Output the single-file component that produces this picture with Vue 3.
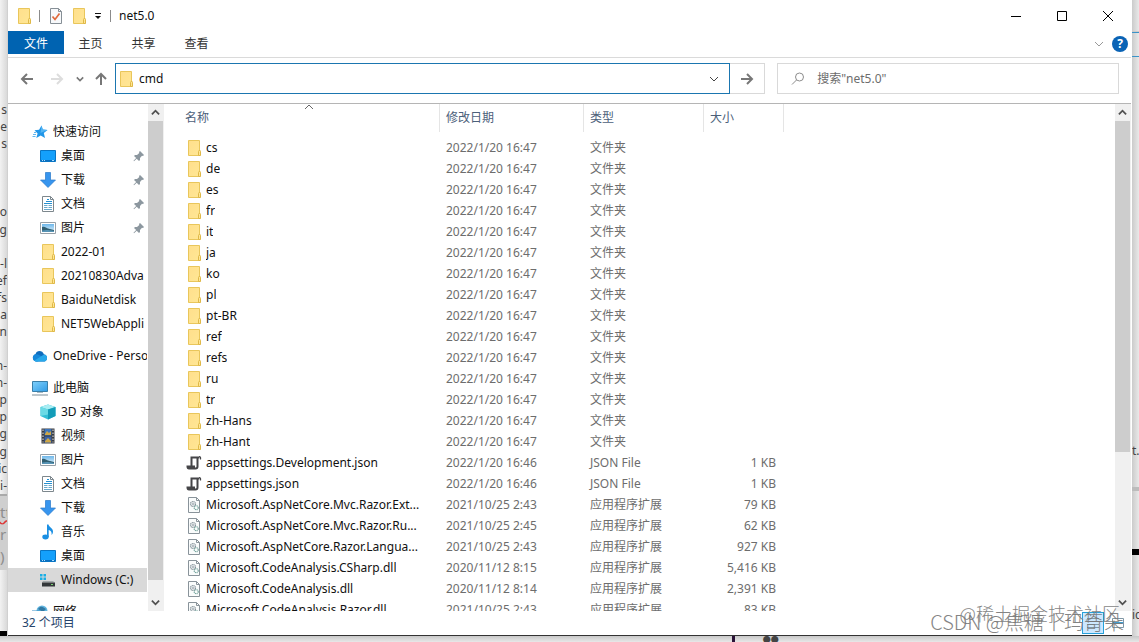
<script setup>
import { ref } from 'vue'

const address = ref('cmd')
const query = ref('')

const behind = ['s', 'e', 's', '', '', '', 'o', 'g', '', '-l', 'ef', 'fs', 'a', 'n', '', 'n-', 'n-', 'p', 'p', 'g', 'g', 'ic', 'i-']

const groups = [
  [
    { icon: 'star', label: '快速访问', root: true },
    { icon: 'desktop', label: '桌面', pin: true },
    { icon: 'down', label: '下载', pin: true },
    { icon: 'doc', label: '文档', pin: true },
    { icon: 'picture', label: '图片', pin: true },
    { icon: 'folder', label: '2022-01' },
    { icon: 'folder', label: '20210830Adva' },
    { icon: 'folder', label: 'BaiduNetdisk' },
    { icon: 'folder', label: 'NET5WebAppli' },
  ],
  [{ icon: 'cloud', label: 'OneDrive - Perso', root: true }],
  [
    { icon: 'pc', label: '此电脑', root: true },
    { icon: 'cube', label: '3D 对象' },
    { icon: 'film', label: '视频' },
    { icon: 'picture', label: '图片' },
    { icon: 'doc', label: '文档' },
    { icon: 'down', label: '下载' },
    { icon: 'music', label: '音乐' },
    { icon: 'desktop', label: '桌面' },
    { icon: 'drive', label: 'Windows (C:)', selected: true },
  ],
  [{ icon: 'network', label: '网络', root: true }],
]

const folders = ['cs', 'de', 'es', 'fr', 'it', 'ja', 'ko', 'pl', 'pt-BR', 'ref', 'refs', 'ru', 'tr', 'zh-Hans', 'zh-Hant']
const files = [
  ...folders.map((name) => ({ icon: 'folder', name, date: '2022/1/20 16:47', type: '文件夹', size: '' })),
  { icon: 'script', name: 'appsettings.Development.json', date: '2022/1/20 16:46', type: 'JSON File', size: '1 KB' },
  { icon: 'script', name: 'appsettings.json', date: '2022/1/20 16:46', type: 'JSON File', size: '1 KB' },
  { icon: 'dll', name: 'Microsoft.AspNetCore.Mvc.Razor.Ext...', date: '2021/10/25 2:43', type: '应用程序扩展', size: '79 KB' },
  { icon: 'dll', name: 'Microsoft.AspNetCore.Mvc.Razor.Ru...', date: '2021/10/25 2:45', type: '应用程序扩展', size: '62 KB' },
  { icon: 'dll', name: 'Microsoft.AspNetCore.Razor.Langua...', date: '2021/10/25 2:43', type: '应用程序扩展', size: '927 KB' },
  { icon: 'dll', name: 'Microsoft.CodeAnalysis.CSharp.dll', date: '2020/11/12 8:15', type: '应用程序扩展', size: '5,416 KB' },
  { icon: 'dll', name: 'Microsoft.CodeAnalysis.dll', date: '2020/11/12 8:14', type: '应用程序扩展', size: '2,391 KB' },
  { icon: 'dll', name: 'Microsoft.CodeAnalysis.Razor.dll', date: '2021/10/25 2:43', type: '应用程序扩展', size: '83 KB' },
]
</script>

<template>
  <div class="screen">
    <svg class="defs" aria-hidden="true">
      <defs>
        <linearGradient id="gFolder" x1="0" y1="0" x2="1" y2="1">
          <stop offset="0" stop-color="#ffdf8c" /><stop offset="1" stop-color="#ffe795" />
        </linearGradient>
        <linearGradient id="gScreen" x1="0" y1="0" x2="1" y2="1">
          <stop offset="0" stop-color="#7fd0fb" /><stop offset="1" stop-color="#2f9be6" />
        </linearGradient>
        <linearGradient id="gSky" x1="0" y1="0" x2="0" y2="1">
          <stop offset="0" stop-color="#6db7ea" /><stop offset="1" stop-color="#e3f3fb" />
        </linearGradient>
      </defs>
      <symbol id="folder" viewBox="0 0 16 16">
        <path d="M2.500 .5h11v9.500l.5 1.500v4H2.500z" fill="url(#gFolder)" stroke="#e9c65b" />
        <path d="M12.500 15.500v-4l1-1.500 1 1.500v4z" fill="#ffe694" stroke="#dfb848" />
      </symbol>
      <symbol id="star" viewBox="0 0 16 16">
        <path d="M9.500 1.500l1.300 4 4.700.5-3.700 3.100 1.200 5-4.300-2.600L4.300 14l1.300-4.400L2.500 6.300l4.600-.5z" fill="#2196e8" />
        <path d="M9.500 1.500l1.300 4 4.700.5-7 3z" fill="#53b5f4" />
        <path d="M1 10.500h3M.5 12.500h3M2 8.500h2" stroke="#61b7ef" />
      </symbol>
      <symbol id="desktop" viewBox="0 0 16 16">
        <path d="M.5 2.500h15v11H.500z" fill="#14a0fb" stroke="#0875c4" />
        <path d="M1 12.500h14" stroke="#0a6dbd" />
        <path d="M2 12.500h1M4 12.500h1M12 12.500h2" stroke="#a9ddff" />
      </symbol>
      <symbol id="down" viewBox="0 0 16 16">
        <path d="M5.500.5h5v7.500h5L8 15.500.5 8h5z" fill="#3795ee" stroke="#2878ca" stroke-width=".7" />
      </symbol>
      <symbol id="doc" viewBox="0 0 16 16">
        <path d="M2.500.5h8l3 3v12h-11z" fill="#fff" stroke="#7d878d" />
        <path d="M10.500.5v3h3" fill="none" stroke="#7d878d" />
        <path d="M7 3.500h2M6 5.500h6M4 7.500h8" stroke="#258fd0" />
        <path d="M4 9.500h3.500M8.500 9.500H12M4 11.500h3.500M8.500 11.500H12M4 13.500h8" stroke="#69a8cc" />
      </symbol>
      <symbol id="picture" viewBox="0 0 16 16">
        <path d="M.5 2.500h15v11H.500z" fill="#fff" stroke="#98a1a8" />
        <path d="M2 4h12v8H2z" fill="url(#gSky)" />
        <path d="M2 7c3-1 4 1 6 1.500l6 1.500v2H2z" fill="#315f71" />
        <path d="M2 10.500c4-1 7-.5 12 .500v1H2z" fill="#5794b5" />
      </symbol>
      <symbol id="cloud" viewBox="0 0 16 16">
        <path d="M4 13.500a3.700 3.700 0 0 1-.5-7.200C4.500 2 10.500 2 12 6.500a3.600 3.600 0 0 1 .5 7z" fill="#0f6cbd" />
        <path d="M3.500 6.300c2.500-.3 4 1 9.500 4.200l-7.500 3H4a3.700 3.700 0 0 1-.5-7.200z" fill="#1688da" />
        <path d="M2 12.700 12 6.500a3.600 3.600 0 0 1 .5 7H4z" fill="#28a8ea" />
      </symbol>
      <symbol id="pc" viewBox="0 0 16 16">
        <path d="M.5 1.500h15v10H.500z" fill="url(#gScreen)" stroke="#397fa9" />
        <path d="M5 12.500h6" stroke="#a9bac4" /><path d="M0 15h16" stroke="#7b8d98" />
      </symbol>
      <symbol id="cube" viewBox="0 0 16 16">
        <path d="M8 .5 15.500 3v9L8 15.500.5 12V3z" fill="#34bfd5" />
        <path d="M8 .5 15.500 3 8 5.500.5 3z" fill="#a9edf3" />
        <path d="M8 5.500 15.500 3v9L8 15.500z" fill="#139cb8" />
        <path d="M.5 3 8 5.500v5L.500 12z" fill="#6bdae5" />
      </symbol>
      <symbol id="film" viewBox="0 0 16 16">
        <path d="M1.500.5h13v15h-13z" fill="#393b40" />
        <path d="M4.500 1h7v6.500h-7z" fill="#3d75bb" /><path d="M4.500 8.500h7V15h-7z" fill="#3a63a7" />
        <path d="M5 6l2-3 2 2 2-2v4H5zM5 13l3-3 3 3v1.500H5z" fill="#cfa746" />
        <path d="M3 1.500v13M13 1.500v13" stroke="#e8e8e8" stroke-dasharray="1.500 1.500" />
      </symbol>
      <symbol id="music" viewBox="0 0 16 16">
        <ellipse cx="5.500" cy="13" rx="3.200" ry="2.400" fill="#1a8fe3" />
        <path d="M7 13V.5h1.500c.5 3 4.500 3.500 4.500 7 0 1.500-.5 2.500-1.500 3.500.7-3-1-4.500-2.800-5V13z" fill="#1a8fe3" />
      </symbol>
      <symbol id="drive" viewBox="0 0 16 16">
        <path d="M0 2h2.500v2.500H0zM3.500 2H6v2.500H3.500zM0 5.500h2.500V8H0zM3.500 5.500H6V8H3.500z" fill="#19aee5" />
        <path d="M3 9h10l2 1.500H2z" fill="#a3a8aa" /><rect x="2" y="10.500" width="13" height="4" fill="#34383a" />
        <path d="M11 12.500h2" stroke="#79d26e" />
      </symbol>
      <symbol id="network" viewBox="0 0 16 16">
        <circle cx="10" cy="7" r="5.500" fill="#62b5df" /><path d="M6 5c3-4 5-2 8 0l-3 3z" fill="#3179a3" />
        <path d="M0 6.500h8v6H0z" fill="#338fc6" />
      </symbol>
      <symbol id="script" viewBox="0 0 16 16">
        <path d="M5.500 11.500V2.500h8M11.500 3v8.500c0 1.500-.5 2-2 2H3c-1 0-1.500-1-1.500-2H9" fill="none" stroke="#454548" stroke-width="2" />
        <path d="M13 1.500c1.500 0 1.800 1 1.500 3" fill="none" stroke="#454548" stroke-width="1.200" />
      </symbol>
      <symbol id="dll" viewBox="0 0 16 16">
        <path d="M2.500.5h8l3 3v12h-11z" fill="#fafcfc" stroke="#89939a" />
        <path d="M10.500.5v3h3" fill="none" stroke="#89939a" />
        <circle cx="7" cy="7" r="2.500" fill="none" stroke="#87949c" stroke-width="1.200" stroke-dasharray="1.200 .5" />
        <circle cx="7" cy="7" r="1" fill="none" stroke="#87949c" stroke-width=".7" />
        <circle cx="10.200" cy="10.700" r="2" fill="none" stroke="#76a49d" stroke-width="1.200" stroke-dasharray="1 .5" />
      </symbol>
      <symbol id="pin" viewBox="0 0 12 12">
        <path d="m7 1 4 4-1 1-1-.3L7 8v2L6 11 3.700 8.700 1 11.300l-.5-.5L3.200 8 1 6l1-1h2l2.300-2L6 2z" fill="#8c979f" />
      </symbol>
      <symbol id="chev" viewBox="0 0 10 10"><path d="m1 3 4 4 4-4" fill="none" stroke="currentColor" stroke-width="var(--w, 1)" /></symbol>
      <symbol id="chevUp" viewBox="0 0 10 10"><path d="m1 7 4-4 4 4" fill="none" stroke="currentColor" stroke-width="var(--w, 1)" /></symbol>
      <symbol id="arrow" viewBox="0 0 14 14"><path d="M13 7H2M7 2 2 7l5 5" fill="none" stroke="currentColor" stroke-width="var(--w, 2)" /></symbol>
    </svg>

    <aside class="edge left">
      <div class="page-behind"><span v-for="(t, i) in behind" :key="i">{{ t }}</span></div>
      <div class="panel-behind"><u>tt</u><span>r</span><span>)</span></div>
      <div class="black-band"></div>
    </aside>

    <main class="window">
      <header class="titlebar">
        <svg class="i16"><use href="#folder" /></svg>
        <i class="bar"></i>
        <button aria-label="属性">
          <svg class="i16" viewBox="0 0 16 16"><path d="M2.500.5h8l3 3v12h-11z" fill="#f7f9fb" stroke="#868f96" /><path d="M10.500.5v3h3" fill="none" stroke="#868f96" /><path d="m4.500 8.500 2.500 3 4.500-6" fill="none" stroke="#e06a3c" stroke-width="1.700" /></svg>
        </button>
        <button aria-label="新建文件夹"><svg class="i16"><use href="#folder" /></svg></button>
        <button class="more" aria-label="自定义"><svg viewBox="0 0 8 8"><path d="M1 1.500h6" stroke="#111" /><path d="M1 4h6L4 7z" fill="#111" /></svg></button>
        <i class="bar"></i>
        <h1>net5.0</h1>
        <div class="controls">
          <button aria-label="最小化"><svg viewBox="0 0 12 12"><path d="M1 6.500h10" stroke="#000" /></svg></button>
          <button aria-label="最大化"><svg viewBox="0 0 12 12"><path d="M1.500 1.500h9v9h-9z" fill="none" stroke="#000" /></svg></button>
          <button aria-label="关闭"><svg viewBox="0 0 12 12"><path d="m1 1 10 10M11 1 1 11" stroke="#000" /></svg></button>
        </div>
      </header>

      <nav class="ribbon">
        <button class="active">文件</button>
        <button>主页</button>
        <button>共享</button>
        <button>查看</button>
        <div class="help">
          <button aria-label="展开功能区"><svg class="i10"><use href="#chev" /></svg></button>
          <button class="q" aria-label="帮助">?</button>
        </div>
      </nav>

      <div class="toolbar">
        <div class="nav">
          <button aria-label="后退"><svg class="i14"><use href="#arrow" /></svg></button>
          <button class="off" aria-label="前进"><svg class="i14 right-facing"><use href="#arrow" /></svg></button>
          <button class="recent" aria-label="最近"><svg class="i8"><use href="#chev" /></svg></button>
          <button aria-label="向上"><svg class="i14 up-facing"><use href="#arrow" /></svg></button>
        </div>
        <div class="address">
          <svg class="i16"><use href="#folder" /></svg>
          <input v-model="address" aria-label="地址" />
          <button aria-label="历史记录"><svg class="i10"><use href="#chev" /></svg></button>
        </div>
        <button class="go" aria-label="转到"><svg class="i14 right-facing"><use href="#arrow" /></svg></button>
        <label class="search">
          <svg viewBox="0 0 14 14"><circle cx="8.500" cy="5" r="4" fill="none" stroke="#8d8d8d" /><path d="M5.500 8 1 12.500" stroke="#8d8d8d" /></svg>
          <input v-model="query" aria-label="搜索" placeholder="搜索&quot;net5.0&quot;" />
        </label>
      </div>

      <section class="body">
        <nav class="tree">
          <ul v-for="(g, i) in groups" :key="i">
            <li v-for="(n, j) in g" :key="j">
              <a href="#" :class="{ root: n.root, selected: n.selected }">
                <svg class="i16"><use :href="'#' + n.icon" /></svg>
                <span>{{ n.label }}</span>
                <svg v-if="n.pin" class="pin"><use href="#pin" /></svg>
              </a>
            </li>
          </ul>
        </nav>
        <div class="scroll">
          <button aria-label="向上滚动"><svg class="i10"><use href="#chevUp" /></svg></button>
          <div class="track"><div class="thumb tree-thumb"></div></div>
          <button aria-label="向下滚动"><svg class="i10"><use href="#chev" /></svg></button>
        </div>
        <div class="list">
          <table>
            <colgroup><col class="c-name" /><col class="c-date" /><col class="c-type" /><col class="c-size" /><col /></colgroup>
            <thead>
              <tr>
                <th class="name"><div>名称<svg class="i10 sort"><use href="#chevUp" /></svg></div></th>
                <th>修改日期</th><th>类型</th><th>大小</th><td></td>
              </tr>
            </thead>
            <tbody>
              <tr v-for="f in files" :key="f.name">
                <td class="name"><div><svg class="i16"><use :href="'#' + f.icon" /></svg><span>{{ f.name }}</span></div></td>
                <td>{{ f.date }}</td><td>{{ f.type }}</td><td class="size">{{ f.size }}</td><td></td>
              </tr>
            </tbody>
          </table>
        </div>
        <div class="scroll">
          <button aria-label="向上滚动"><svg class="i10"><use href="#chevUp" /></svg></button>
          <div class="track"><div class="thumb list-thumb"></div></div>
          <button aria-label="向下滚动"><svg class="i10"><use href="#chev" /></svg></button>
        </div>
      </section>

      <footer class="status">
        <span>32 个项目</span>
        <div class="views">
          <button class="on" aria-label="详细信息"><svg viewBox="0 0 14 14"><path d="M1 2.500h12M1 5.500h12M1 8.500h12M1 11.500h12" stroke="#8097a5" /></svg></button>
          <button aria-label="大图标"><svg viewBox="0 0 14 14"><path d="M1.500 2.500h11v9h-11z" fill="#fff" stroke="#8097a5" /><path d="M2 7h10" stroke="#3f9fd0" stroke-width="2" /></svg></button>
        </div>
      </footer>
    </main>

    <aside class="edge right">
      <div class="r-one"></div>
      <div class="r-two"></div>
      <div class="r-three">t..</div>
      <div class="r-four"></div>
      <div class="r-band"></div>
      <div class="r-five">ic</div>
    </aside>

    <div class="below"><span class="divider"></span><span class="dots">●●</span></div>
    <p class="mark first">@稀土掘金技术社区</p>
    <p class="mark second">CSDN @焦糖丨玛奇朵</p>
  </div>
</template>

<style>
html, body { margin: 0; overflow: hidden; }
</style>

<style scoped>
* { box-sizing: border-box; }
.screen {
  position: relative; display: grid; height: 100vh; overflow: hidden;
  grid-template-columns: 8px minmax(0, 1fr) 7px; grid-template-rows: minmax(0, 1fr) 6px;
  background: #dedede; color: #111; font: 12px/20px "Noto Sans", "Noto Sans CJK SC", sans-serif;
}
.defs { position: absolute; width: 0; height: 0; }
svg { display: block; flex: none; }
button { display: flex; align-items: center; justify-content: center; padding: 0; border: 0; background: none; color: inherit; font: inherit; }
input { min-width: 0; padding: 0; border: 0; outline: 0; background: none; color: inherit; font: inherit; }
ul { margin: 0; padding: 0; list-style: none; }
.i16 { width: 16px; height: 16px; }
.i14 { width: 14px; height: 14px; }
.i10 { width: 10px; height: 10px; }
.i8 { width: 8px; height: 8px; --w: 2; }
.right-facing { transform: rotate(180deg); }
.up-facing { transform: rotate(90deg); }

.edge { display: flex; flex-direction: column; overflow: hidden; background: #e9e9e9; }
.left { border-right: 1px solid #d0d0d0; background: linear-gradient(90deg, #f2f2f2, #d9d9d9); }
.page-behind { display: flex; flex-direction: column; justify-content: space-between; height: 392px; margin-top: 102px; color: #444; line-height: 16px; }
.page-behind span { display: flex; justify-content: flex-end; height: 16px; }
.panel-behind { display: flex; flex-direction: column; gap: 2px; height: 76px; padding-top: 6px; border-top: 2px solid #aaa; background: #cfcfcf; color: #8d8d8d; font-size: 15px; }
.panel-behind u { text-decoration: underline wavy #d33; }
.black-band { height: 5px; margin-top: auto; background: #000; }

.window { display: flex; flex-direction: column; min-width: 0; min-height: 0; padding-right: 1px; background: #fff; border-bottom: 1px solid #333; }
.titlebar { display: flex; align-items: center; height: 31px; padding-left: 8px; }
.titlebar .bar { width: 1px; height: 12px; margin: 0 8px 0 7px; background: #8b8b8b; }
.titlebar button { margin-right: 7px; }
.titlebar .more { width: 8px; margin-right: 1px; }
.more svg { width: 8px; height: 8px; }
.titlebar h1 { margin: 0; font-size: 12px; font-weight: 400; }
.titlebar .controls { display: flex; margin-left: auto; }
.titlebar .controls button { width: 46px; height: 30px; margin: 0; }
.controls svg { width: 12px; height: 12px; }

.ribbon { display: flex; height: 27px; padding-bottom: 3px; border-bottom: 1px solid #dadada; color: #333; }
.ribbon button { width: 53px; padding-top: 2px; }
.ribbon .active { width: 56px; background: #0063b1; color: #fff; }
.help { display: flex; align-items: center; gap: 8px; margin-left: auto; padding: 2px 3px 0 0; color: #999; }
.help button { width: auto; padding: 0; }
.help .q { width: 16px; height: 16px; border-radius: 50%; background: #0a63b5; color: #fff; font-weight: 700; }

.toolbar { display: flex; height: 46px; padding: 5px 12px 9px 0; border-bottom: 1px solid #b5b5b5; }
.nav { display: flex; align-items: center; width: 107px; padding-left: 12px; color: #777; }
.nav .off { margin-left: 16px; color: #ddd; }
.nav .recent { margin: 0 10px 0 12px; }
.address { display: flex; flex: 615 1 0; align-items: center; min-width: 0; padding-left: 2px; border: 1px solid #1b76b0; }
.address input { flex: 1; margin-left: 5px; color: #111; }
.address button { width: 30px; height: 100%; color: #444; }
.go { width: 35px; border: 1px solid #d9d9d9; border-left: 0; color: #777; }
.search { display: flex; flex: 342 1 0; align-items: center; min-width: 0; margin-left: 12px; border: 1px solid #d9d9d9; color: #6d6d6d; }
.search svg { width: 14px; height: 14px; margin: 0 12px 0 13px; }
.search input { flex: 1; }
.search input::placeholder { color: #6d6d6d; opacity: 1; }

.body { display: flex; flex: 1; min-height: 0; overflow: hidden; }
.tree { width: 140px; padding-top: 16px; overflow: hidden; }
.tree ul { margin-bottom: 8px; }
.tree a { display: flex; align-items: center; height: 24px; padding-left: 32px; color: #111; text-decoration: none; white-space: nowrap; }
.tree li { width: 139px; overflow: hidden; }
.tree a.root { padding-left: 24px; }
.tree a.selected { background: #d9d9d9; }
.tree a span { margin-left: 5px; }
.pin { width: 12px; height: 12px; margin: 0 2px 0 auto; }
.scroll { display: flex; flex: none; flex-direction: column; width: 16px; background: #f0f0f0; color: #505050; --w: 2; }
.scroll button { width: 15px; height: 17px; }
.scroll .i10 { width: 9px; height: 9px; }
.track { flex: 1; }
.thumb { width: 15px; background: #cdcdcd; }
.tree-thumb { height: 97%; }
.list-thumb { height: 70%; }
.list { flex: 1; min-width: 0; overflow: hidden; }

table { width: 100%; border-collapse: separate; border-spacing: 0; table-layout: fixed; color: #6d6d6d; }
.c-name { width: 276px; }
.c-date { width: 144px; }
.c-type { width: 120px; }
.c-size { width: 80px; }
th { height: 28px; padding: 0 0 0 6px; border-right: 1px solid #e5e5e5; color: #4c607a; font-weight: 400; text-align: left; }
th.name { padding-left: 21px; }
th.name div { position: relative; }
.sort { position: absolute; top: -6px; left: 119px; color: #666; }
tbody::before { content: ""; display: block; height: 5px; }
td { height: 21px; padding: 0 0 0 6px; white-space: nowrap; }
td.name { padding: 0 0 0 22px; color: #111; }
td.name div { display: flex; align-items: center; }
td.name span { margin-left: 4px; overflow: hidden; text-overflow: ellipsis; }
td.size { padding-right: 8px; text-align: right; }

.status { display: flex; align-items: center; height: 24px; padding: 0 2px 0 14px; color: #26446b; }
.views { display: flex; gap: 3px; margin-left: auto; }
.views button { width: 22px; height: 22px; border: 1px solid transparent; }
.views .on { border-color: #26a0da; background: #cce8ff; }
.views svg { width: 14px; height: 14px; }

.right { color: #444; background: linear-gradient(90deg, #cbcbcb, #e9e9e9); }
.r-one { height: 32px; border-bottom: 1px solid #ccc; }
.r-two { height: 25px; border: solid #3b93c8; border-width: 1px 0; }
.r-three { height: 434px; padding-top: 384px; border-bottom: 4px solid #bcbcbc; }
.r-four { height: 58px; }
.r-band { height: 6px; background: #000; }
.r-five { height: 66px; padding-top: 50px; }
.below { display: flex; grid-column: 1 / -1; overflow: hidden; background: linear-gradient(#c8c8c8, #e8e8e8); color: #444; font-size: 8px; line-height: 8px; }
.divider { width: 64.500%; border-right: 3px solid #2b1238; }
.dots { margin-left: 28px; }
.mark { position: absolute; margin: 0; color: #777; font-family: "Noto Sans CJK SC", sans-serif; font-weight: 300; white-space: nowrap; opacity: .9; }
.first { right: 19px; bottom: 19px; font-size: 18px; }
.second { right: 15px; bottom: 10px; font-size: 20px; }
</style>
